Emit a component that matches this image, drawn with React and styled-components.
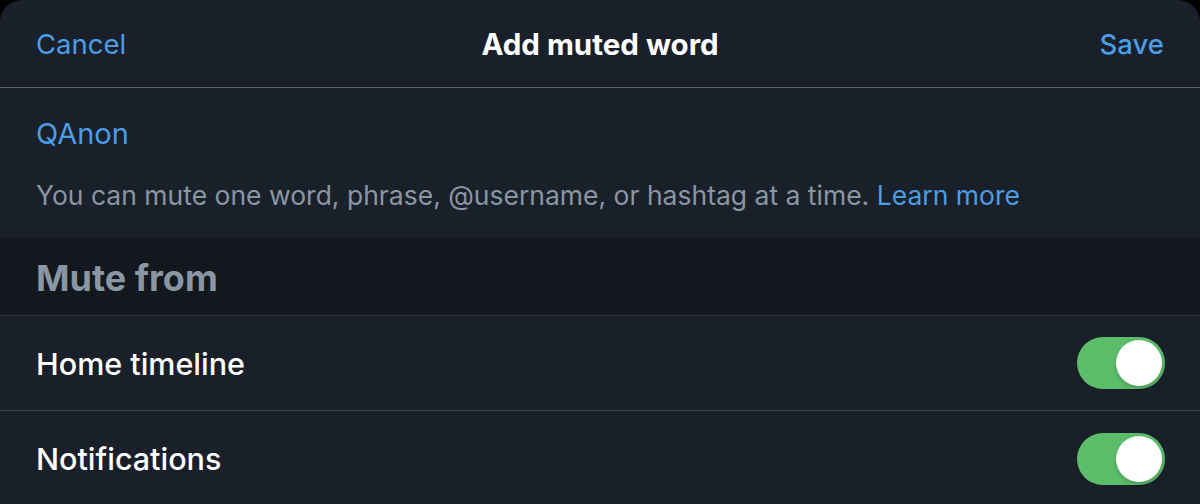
import React from 'react';
import styled, { createGlobalStyle } from 'styled-components';

/* ==================================================
 *  Styles
================================================== */
const GlobalStyle = createGlobalStyle`
  html, body {
    margin: 0;
    padding: 0;
    background: #000;
  }
  body {
    font-family: Inter, "Open Sans", sans-serif;
    -webkit-font-smoothing: antialiased;
  }
`;

const Sheet = styled.div`
  width: 1200px;
  height: 504px;
  overflow: hidden;
  background: #1a2029;
  border-radius: 22px 22px 0 0;
  display: flex;
  flex-direction: column;
`;

const NavBar = styled.header`
  height: 87px;
  flex-shrink: 0;
  display: grid;
  grid-template-columns: 1fr auto 1fr;
  align-items: center;
  padding: 0 36px;
  border-bottom: 1px solid #5b6068;
`;

const NavButton = styled.button`
  background: none;
  border: 0;
  padding: 0;
  font: inherit;
  font-size: 27.5px;
  font-weight: ${(p) => (p.$strong ? 500 : 400)};
  color: #4c9ce6;
  justify-self: ${(p) => (p.$end ? 'end' : 'start')};
  cursor: pointer;
`;

const Title = styled.h1`
  margin: 0;
  font-size: 29.5px;
  font-weight: 700;
  color: #fff;
`;

const Entry = styled.section`
  padding: 29px 36px 0;
  height: 150px;
  flex-shrink: 0;
  box-sizing: border-box;
`;

const Keyword = styled.div`
  font-size: 29px;
  color: #4c9ce6;
  line-height: 34px;
`;

const Hint = styled.p`
  margin: 27px 0 0;
  font-size: 26.5px;
  line-height: 34px;
  color: #8a96a3;

  a {
    color: #4c9ce6;
    text-decoration: none;
  }
`;

const SectionHead = styled.h2`
  margin: 0;
  height: 78px;
  flex-shrink: 0;
  box-sizing: border-box;
  display: flex;
  align-items: center;
  padding: 2px 36px 0;
  background: #13171e;
  border-bottom: 1px solid #2e343c;
  font-size: 36px;
  font-weight: 700;
  color: #8a96a3;
`;

const Row = styled.div`
  height: 95px;
  flex-shrink: 0;
  box-sizing: border-box;
  display: flex;
  align-items: center;
  justify-content: space-between;
  padding: 0 35px 0 36px;
  border-bottom: ${(p) => (p.$last ? 'none' : '1px solid #3b4149')};
`;

const RowLabel = styled.span`
  font-size: 30.5px;
  font-weight: 500;
  color: #fff;
`;

const Switch = styled.span`
  position: relative;
  width: 88px;
  height: 52px;
  border-radius: 26px;
  background: ${(p) => (p.$on ? '#5bbd6a' : '#39404a')};

  &::after {
    content: '';
    position: absolute;
    top: 3px;
    left: ${(p) => (p.$on ? '39px' : '3px')};
    width: 46px;
    height: 46px;
    border-radius: 50%;
    background: #fff;
    box-shadow: 0 2px 4px rgba(0, 0, 0, 0.2);
  }
`;

/* ==================================================
 *  Render
================================================== */
const sources = [
  { label: 'Home timeline', on: true },
  { label: 'Notifications', on: true },
];

export default function App() {
  return (
    <>
      <GlobalStyle />
      <Sheet>
        <NavBar>
          <NavButton>Cancel</NavButton>
          <Title>Add muted word</Title>
          <NavButton $end $strong>
            Save
          </NavButton>
        </NavBar>

        <Entry>
          <Keyword>QAnon</Keyword>
          <Hint>
            You can mute one word, phrase, @username, or hashtag at a time. <a href="#">Learn more</a>
          </Hint>
        </Entry>

        <SectionHead>Mute from</SectionHead>

        {sources.map((s, i) => (
          <Row key={s.label} $last={i === sources.length - 1}>
            <RowLabel>{s.label}</RowLabel>
            <Switch $on={s.on} />
          </Row>
        ))}
      </Sheet>
    </>
  );
}
